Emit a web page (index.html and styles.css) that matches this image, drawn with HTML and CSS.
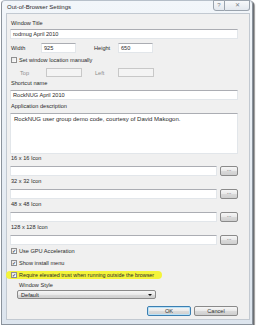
FILE: index.html
```html
<!DOCTYPE html>
<html lang="en">
<head>
    <meta charset="UTF-8">
    <title>Out-of-Browser Settings</title>
    <link rel="stylesheet" href="styles.css">
</head>
<body>
    <div class="window">
        <div class="titlebar">
            <span class="title">Out-of-Browser Settings</span>
            <div class="caption-buttons">
                <span class="cap-btn help">?</span>
                <span class="cap-btn close">&#x2715;</span>
            </div>
        </div>
        <div class="client">
            <div class="label first">Window Title</div>
            <div class="textbox">rodmug April 2010</div>

            <div class="pair-row">
                <span class="pair-label">Width</span>
                <span class="textbox small">925</span>
                <span class="pair-label second">Height</span>
                <span class="textbox small">650</span>
            </div>

            <div class="check-row location">
                <span class="checkbox"></span>
                <span>Set window location manually</span>
            </div>

            <div class="pair-row disabled">
                <span class="pair-label indent">Top</span>
                <span class="textbox small off"></span>
                <span class="pair-label second">Left</span>
                <span class="textbox small off"></span>
            </div>

            <div class="label">Shortcut name</div>
            <div class="textbox">RockNUG April 2010</div>

            <div class="label">Application description</div>
            <div class="textbox area">RockNUG user group demo code, courtesy of David Makogon.</div>

            <div class="label icon-label">16 x 16 Icon</div>
            <div class="icon-row"><span class="textbox wide"></span><span class="button browse">...</span></div>
            <div class="label icon-label">32 x 32 Icon</div>
            <div class="icon-row"><span class="textbox wide"></span><span class="button browse">...</span></div>
            <div class="label icon-label">48 x 48 Icon</div>
            <div class="icon-row"><span class="textbox wide"></span><span class="button browse">...</span></div>
            <div class="label icon-label">128 x 128 Icon</div>
            <div class="icon-row"><span class="textbox wide"></span><span class="button browse">...</span></div>

            <div class="check-row gpu">
                <span class="checkbox checked">&#x2713;</span>
                <span>Use GPU Acceleration</span>
            </div>
            <div class="check-row">
                <span class="checkbox checked">&#x2713;</span>
                <span>Show install menu</span>
            </div>
            <div class="check-row marked">
                <span class="checkbox checked">&#x2713;</span>
                <span>Require elevated trust when running outside the browser</span>
            </div>

            <div class="label style-label">Window Style</div>
            <div class="select">
                <span>Default</span>
                <span class="arrow"></span>
            </div>

            <div class="actions">
                <span class="button default">OK</span>
                <span class="button">Cancel</span>
            </div>
        </div>
    </div>
</body>
</html>
```

FILE: styles.css
```css
* {
    margin: 0;
    padding: 0;
    box-sizing: border-box;
}

body {
    background: #ffffff;
    font-family: 'Liberation Sans', Arial, sans-serif;
    font-size: 5.6px;
    color: #2a2a2a;
}

.window {
    width: 252px;
    height: 325px;
    margin-left: 1px;
    background: linear-gradient(180deg, #f2f6fa, #dde5ee);
    border: 1px solid #8b939c;
    border-top-color: #b7c0ca;
    border-radius: 4px 4px 0 0;
    box-shadow: 1px 1px 0 #6b6f74, 2px 2px 1px #9a9a9a;
    padding: 0 2px 4px 4px;
    display: flex;
    flex-direction: column;
}

.titlebar {
    height: 12px;
    display: flex;
    justify-content: space-between;
    align-items: flex-start;
}

.title {
    font-size: 6px;
    line-height: 13px;
    color: #2b2b2b;
    padding-left: 1px;
}

.caption-buttons {
    display: flex;
    margin-top: -1px;
}

.cap-btn {
    height: 11px;
    border: 1px solid #9aa3ad;
    background: linear-gradient(180deg, #f7f9fb, #e3e8ee);
    color: #7a8088;
    text-align: center;
    line-height: 9px;
    font-size: 6px;
}

.help {
    width: 12px;
    border-radius: 0 0 0 3px;
}

.close {
    width: 25px;
    border-left: none;
    border-radius: 0 0 3px 0;
}

.client {
    flex: 1;
    background: #f0f0f0;
    border: 1px solid #c2c9d1;
    padding: 5px 11px 0 3px;
    display: flex;
    flex-direction: column;
}

.label {
    line-height: 8px;
    padding-left: 1px;
    margin-top: 2px;
}

.label.first {
    margin-top: 0;
}

.textbox {
    display: block;
    height: 10px;
    margin-top: 2px;
    background: #ffffff;
    border: 1px solid #e2e6ea;
    border-top-color: #abadb3;
    line-height: 8px;
    padding-left: 2px;
    white-space: nowrap;
}

.label + .textbox {
    margin-top: 3px;
}

.label.first + .textbox {
    margin-top: 2px;
}

.pair-row {
    display: flex;
    align-items: center;
    margin-top: 4px;
    height: 10px;
}

.pair-row.disabled {
    height: 9px;
    color: #8d8d8d;
}

.pair-label {
    width: 31px;
    padding-left: 1px;
}

.pair-label.indent {
    width: 36px;
    padding-left: 10px;
}

.pair-label.second {
    width: 42px;
    padding-left: 18px;
}

.pair-row.disabled .pair-label.second {
    width: 36px;
    padding-left: 13px;
}

.textbox.small {
    width: 35px;
    margin-top: 0;
    height: 10px;
}

.textbox.off {
    height: 9px;
    width: 36px;
    background: #f4f4f4;
    border-color: #c8c8c8;
}

.check-row {
    display: flex;
    align-items: center;
    height: 8px;
    margin-top: 3px;
    padding-left: 1px;
}

.checkbox {
    width: 6px;
    height: 6px;
    margin-right: 2px;
    border: 1px solid #8f8f8f;
    background: linear-gradient(135deg, #e6e6e6, #ffffff);
    color: #2b3a55;
    font-size: 5px;
    line-height: 4px;
    text-align: center;
    font-weight: bold;
}

.textbox.area {
    height: 41px;
    white-space: normal;
    line-height: 10px;
    padding-left: 3px;
    font-size: 6px;
}

.icon-label {
    margin-top: 0;
}

.icon-row .textbox,
.icon-row .button {
    margin-top: 0;
}

.icon-row {
    display: flex;
    gap: 3px;
    height: 10px;
    margin-top: 3px;
}

.label.icon-label + .icon-row {
    margin-top: 4px;
}

.icon-label ~ .icon-label {
    margin-top: 1px;
}

.textbox.wide {
    flex: 1;
    height: 10px;
}

.button {
    display: block;
    height: 10px;
    border: 1px solid #8a8a8a;
    border-radius: 2px;
    background: linear-gradient(180deg, #f6f6f6 0%, #e9e9e9 50%, #dadada 51%, #cfcfcf 100%);
    text-align: center;
    line-height: 8px;
    color: #333333;
}

.browse {
    width: 18px;
    line-height: 5px;
}

.check-row.gpu {
    margin-top: 2px;
}

.check-row + .check-row {
    margin-top: 4px;
}

.check-row.marked {
    margin-left: -4px;
    padding-left: 5px;
    width: 156px;
    background: #f4f43a;
    border-radius: 4px;
    font-size: 5.4px;
}

.label.style-label {
    padding-left: 9px;
    margin-top: 2px;
}

.select {
    display: flex;
    justify-content: space-between;
    align-items: center;
    width: 139px;
    height: 9px;
    margin: 1px 0 0 7px;
    padding: 0 3px 0 3px;
    border: 1px solid #8a8a8a;
    border-radius: 2px;
    background: linear-gradient(180deg, #f6f6f6 0%, #e9e9e9 50%, #dadada 51%, #cfcfcf 100%);
}

.arrow {
    width: 0;
    height: 0;
    border-left: 2px solid transparent;
    border-right: 2px solid transparent;
    border-top: 2px solid #111111;
}

.actions {
    display: flex;
    justify-content: flex-end;
    gap: 3px;
    margin-top: 7px;
}

.actions .button {
    width: 44px;
}

.button.default {
    border-color: #3c7fb1;
    box-shadow: inset 0 0 0 1px #b9e1f7;
}
```
